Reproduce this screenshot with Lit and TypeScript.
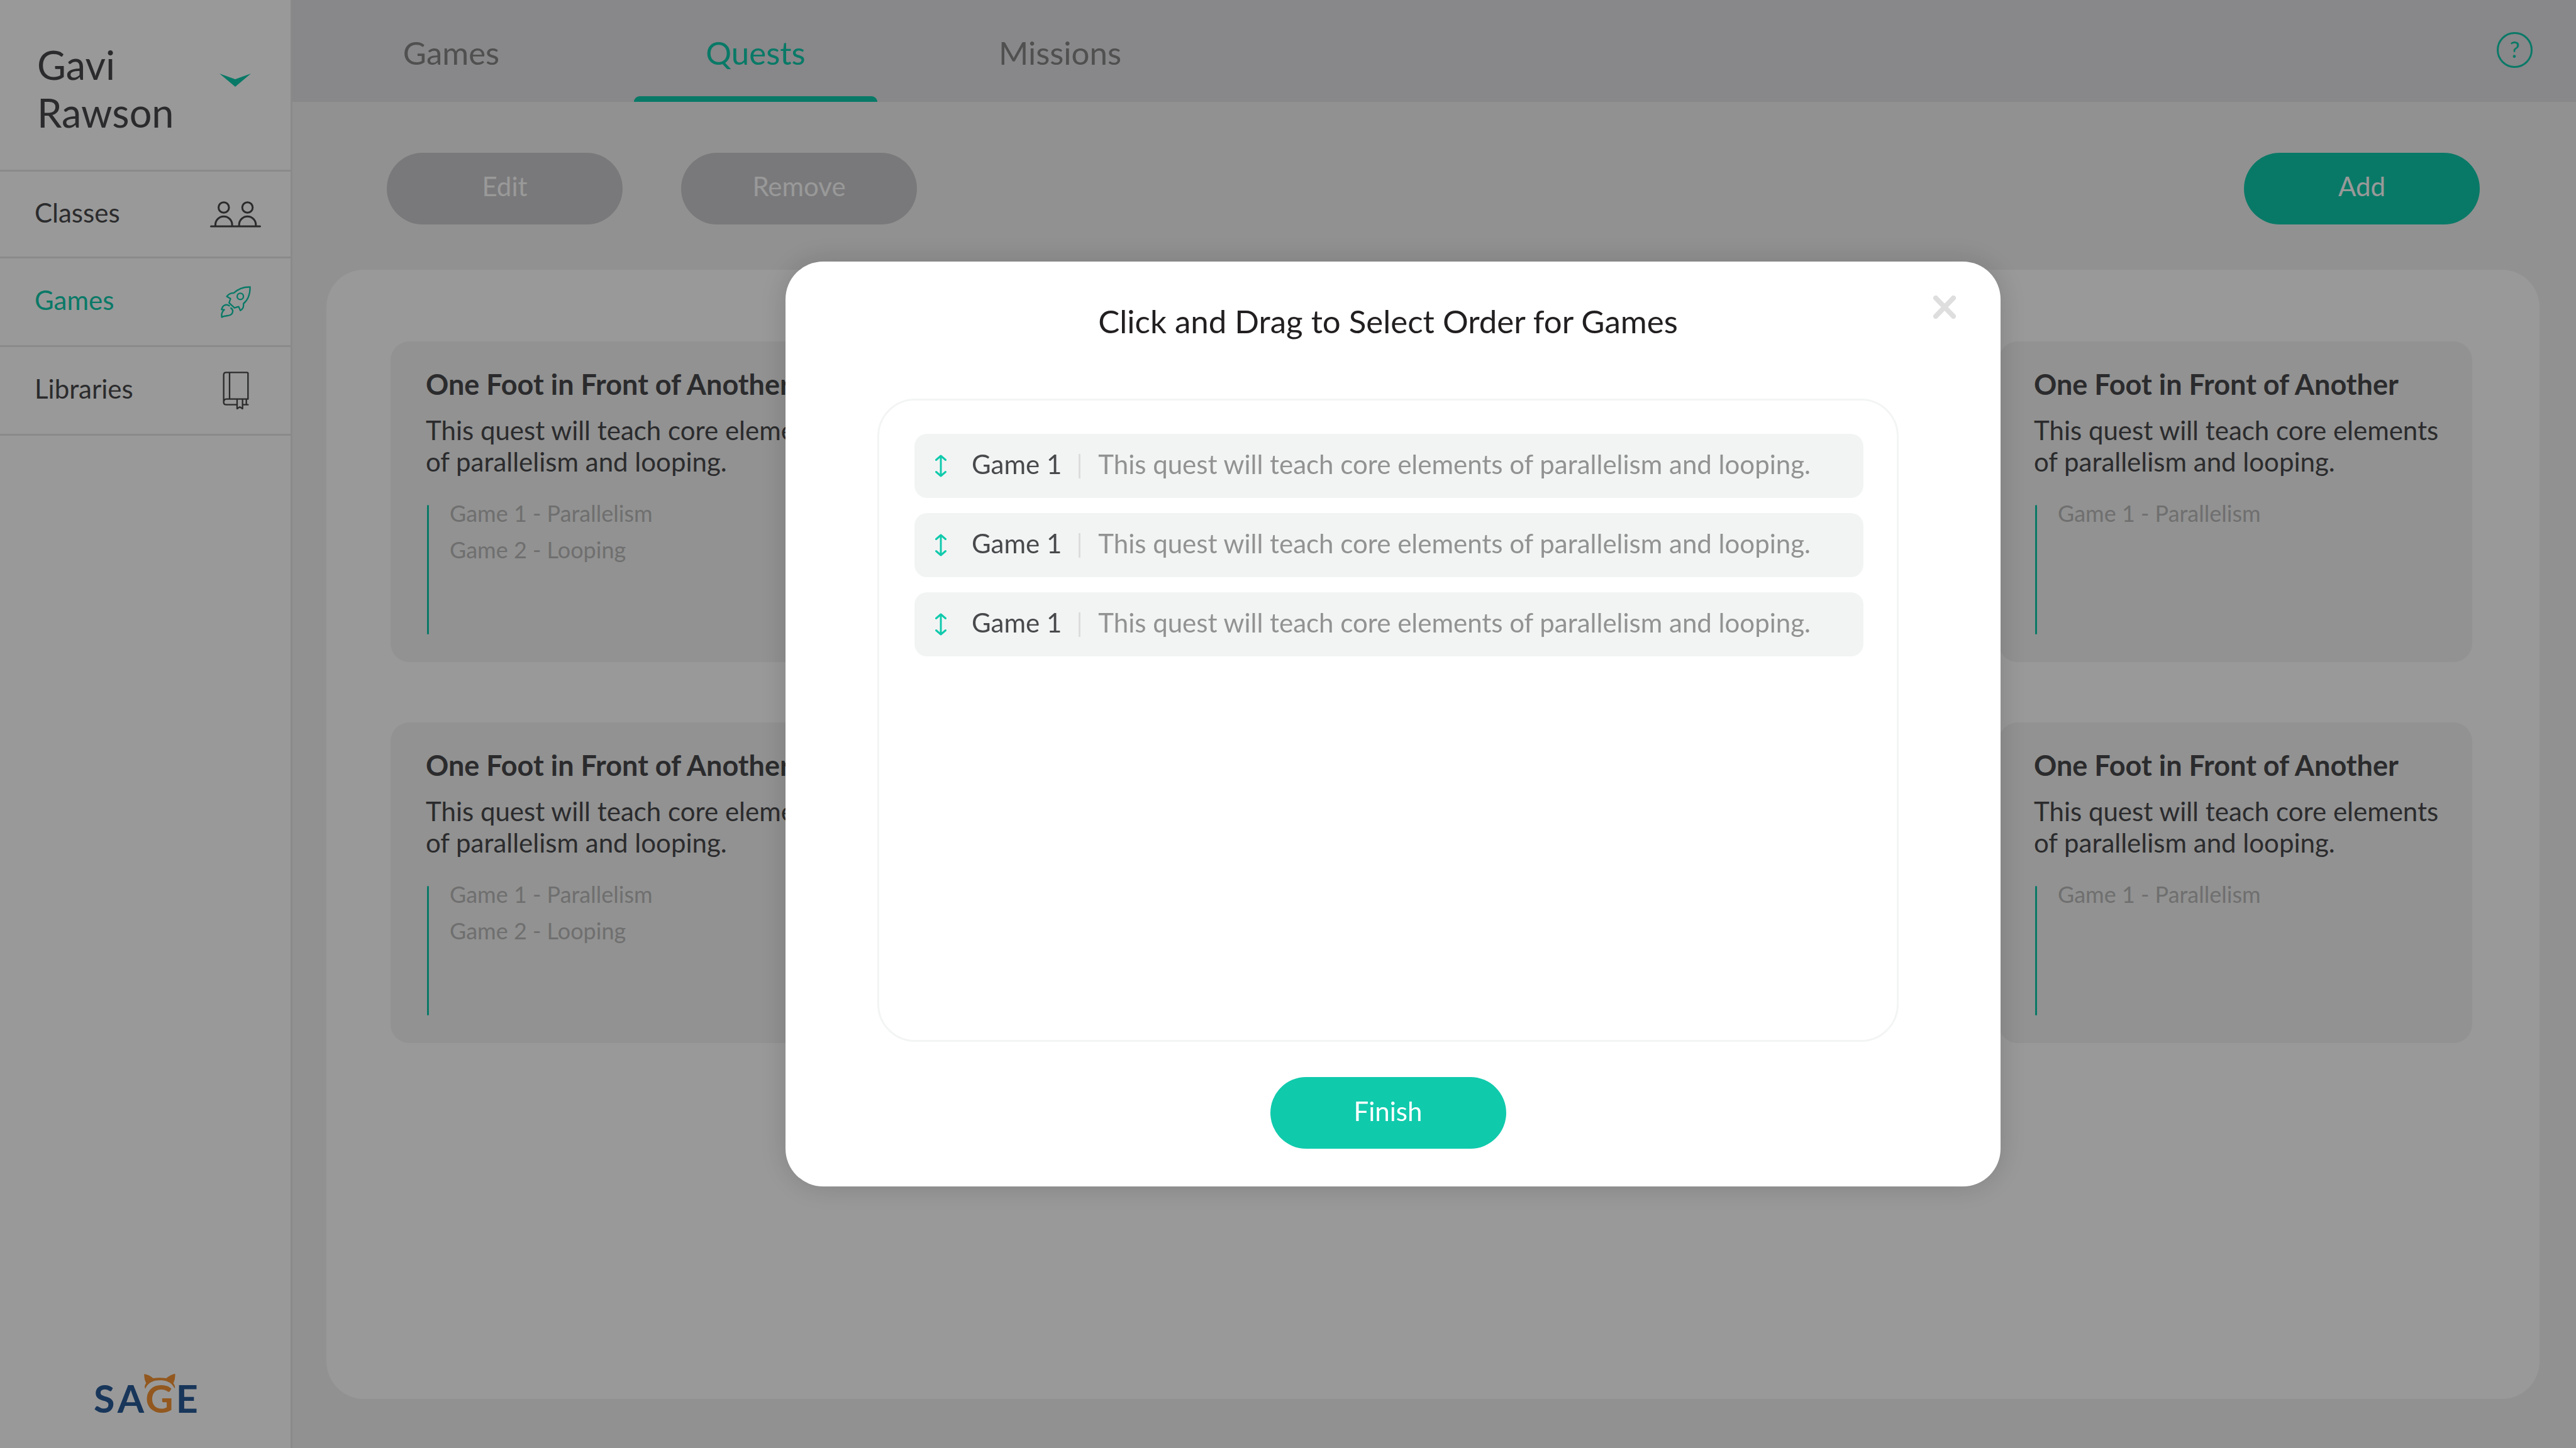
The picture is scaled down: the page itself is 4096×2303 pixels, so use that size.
import { LitElement, html, css, svg } from "lit";
import { customElement, property } from "lit/decorators.js";
import { classMap } from "lit/directives/class-map.js";

interface Quest {
  title: string;
  summary: string;
  games: string[];
}

const SUMMARY = "This quest will teach core elements of parallelism and looping.";
const TITLE = "One Foot in Front of Another";

const row = (): Quest[] => [
  { title: TITLE, summary: SUMMARY, games: ["Game 1 - Parallelism", "Game 2 - Looping"] },
  { title: TITLE, summary: SUMMARY, games: ["Game 1 - Parallelism"] },
];

const quests: Quest[] = [...row(), ...row()];

const peopleIcon = html`<svg width="81" height="42" viewBox="0 0 81 42" fill="none" stroke="currentColor" stroke-width="3" stroke-linecap="round" aria-hidden="true">
  <circle cx="21.8" cy="10" r="8.3" />
  <circle cx="59.5" cy="10" r="8.3" />
  <path d="M8.5 39v-1.5a13.3 13.3 0 0 1 26.6 0V39M46.2 39v-1.5a13.3 13.3 0 0 1 26.6 0V39M1.5 39.9h78" />
</svg>`;

const rocketIcon = html`<svg width="48" height="51" viewBox="33 33 145 153" fill="none" stroke="currentColor" stroke-width="7" stroke-linecap="round" stroke-linejoin="round" aria-hidden="true">
  <path d="M174 37C146 36 119 44 95 66C84 65 74 67 62 82L80 93L73 113L99 137L119 131L127 150C139 142 144 135 142 117C163 100 174 76 174 37Z" />
  <circle cx="127" cy="82" r="15" />
  <path d="M74 127C60 118 42 122 37 145L50 146C38 156 35 166 38 182C55 171 80 180 88 163C93 152 90 143 82 138" />
</svg>`;

const bookIcon = html`<svg width="42" height="61" viewBox="43 440 124 183" fill="none" stroke="currentColor" stroke-width="7" stroke-linecap="round" stroke-linejoin="round" aria-hidden="true">
  <path d="M163 571V448Q163 444 158 444H58Q47 444 47 456V587Q47 598 59 598H110M138 598H163M155 572V598M75 444V571M47 588Q47 571 60 571H163M111 572V617L124 609L137 617V572" />
</svg>`;

const chevronIcon = html`<svg width="50" height="21" viewBox="0 0 50 21" fill="currentColor" aria-hidden="true">
  <path d="M0 0L25 9L50 0L25 21Z" />
</svg>`;

const arrowsIcon = html`<svg width="18" height="36" viewBox="0 0 18 36" fill="none" stroke="currentColor" stroke-width="3" stroke-linecap="round" stroke-linejoin="round" aria-hidden="true">
  <path d="M9 2v32M1.5 8.500L9 2l7.500 6.500M1.500 27.500L9 34l7.500-6.500" />
</svg>`;

const closeIcon = html`<svg width="36" height="37" viewBox="0 0 36 37" fill="none" stroke="currentColor" stroke-width="8" stroke-linecap="round" aria-hidden="true">
  <path d="M4 4L32 33M32 4L4 33" />
</svg>`;

const earsShape = svg`<path fill="#f39335" d="M238 4Q262 8 280 24Q312 19 343 24Q362 8 385 2Q388 25 377 48Q388 62 383 73C366 40 340 34 312 34C284 34 258 42 243 74Q236 62 247 48Q236 25 238 4Z" />`;

@customElement("quest-card")
export class QuestCard extends LitElement {
  @property({ attribute: false }) quest!: Quest;

  static styles = css`
    :host {
      display: block;
    }
    .card {
      box-sizing: border-box;
      height: 510px;
      padding: 41px 48px 44px 56px;
      border-radius: 30px;
      background: #f3f3f3;
      color: #48494b;
      display: flex;
      flex-direction: column;
    }
    .title {
      margin: 0 0 21px;
      font-size: 45px;
      line-height: 54px;
      font-weight: 700;
    }
    .summary {
      margin: 0 0 44px;
      font-size: 42px;
      line-height: 50px;
    }
    .games {
      flex: 1;
      display: flex;
      gap: 33px;
      color: #bababa;
      font-size: 36px;
      line-height: 58px;
    }
    .rule {
      width: 3px;
      margin-left: 2px;
      border-radius: 2px;
      background: #10caac;
    }
    .names {
      margin: -16px 0 0;
      padding: 0;
      list-style: none;
    }
  `;

  render() {
    return html`
      <article class="card">
        <h2 class="title">${this.quest.title}</h2>
        <p class="summary">${this.quest.summary}</p>
        <div class="games">
          <span class="rule"></span>
          <ul class="names">
            ${this.quest.games.map((name) => html`<li>${name}</li>`)}
          </ul>
        </div>
      </article>
    `;
  }
}

@customElement("order-dialog")
export class OrderDialog extends LitElement {
  static styles = css`
    :host {
      display: block;
    }
    .dialog {
      box-sizing: border-box;
      width: 1932px;
      padding: 64px 162px 60px 146px;
      border-radius: 60px;
      background: #fff;
      box-shadow: 0 0 48px rgba(0, 0, 0, 0.16);
      position: relative;
      display: flex;
      flex-direction: column;
      align-items: center;
    }
    .heading {
      margin: 0 0 92px;
      color: #221f20;
      font-size: 51px;
      line-height: 62px;
      font-weight: 400;
    }
    .close {
      position: absolute;
      top: 54px;
      right: 71px;
      padding: 0;
      border: 0;
      background: none;
      color: #dedede;
      display: flex;
    }
    .list {
      box-sizing: border-box;
      align-self: stretch;
      min-height: 1023px;
      margin: 0 0 56px;
      padding: 53px 53px 53px 56px;
      border: 3px solid #f3f4f4;
      border-radius: 60px;
      list-style: none;
      display: flex;
      flex-direction: column;
      gap: 24px;
    }
    .item {
      height: 102px;
      border-radius: 20px;
      background: #f2f4f4;
      display: flex;
      align-items: center;
      padding-left: 33px;
      font-size: 42px;
      line-height: 50px;
    }
    .handle {
      padding: 0;
      margin-right: 40px;
      border: 0;
      background: none;
      color: #10caac;
      display: flex;
      cursor: grab;
    }
    .name {
      color: #48494b;
      padding-bottom: 6px;
    }
    .about {
      color: #929292;
      margin-left: 28px;
      padding-bottom: 6px;
    }
    .divider {
      width: 3px;
      height: 39px;
      margin-left: 27px;
      background: #dcdcdc;
    }
    .finish {
      width: 375px;
      height: 114px;
      padding: 0 0 6px;
      border: 0;
      border-radius: 57px;
      background: #10caac;
      color: #fff;
      font: inherit;
      font-size: 42px;
    }
  `;

  render() {
    return html`
      <section class="dialog" role="dialog" aria-modal="true" aria-labelledby="heading">
        <h1 class="heading" id="heading">Click and Drag to Select Order for Games</h1>
        <button class="close" aria-label="Close">${closeIcon}</button>
        <ul class="list">
          ${[0, 1, 2].map(
            () => html`
              <li class="item" draggable="true">
                <button class="handle" aria-label="Move">${arrowsIcon}</button>
                <span class="name">Game 1</span>
                <span class="divider"></span>
                <span class="about">${SUMMARY}</span>
              </li>
            `
          )}
        </ul>
        <button class="finish">Finish</button>
      </section>
    `;
  }
}

@customElement("app-root")
export class AppRoot extends LitElement {
  static styles = css`
    :host {
      display: block;
      font-family: Lato, "Noto Sans", sans-serif;
      color: #48494b;
    }
    .page {
      display: flex;
      min-height: 100vh;
      background: #f2f2f2;
    }
    .sidebar {
      width: 462px;
      flex: none;
      border-right: 3px solid #e6e6e6;
      background: #fff;
      display: flex;
      flex-direction: column;
    }
    .user {
      box-sizing: border-box;
      width: 100%;
      height: 273px;
      padding: 12px 63px 0 59px;
      border: 0;
      border-bottom: 3px solid #e6e6e6;
      background: none;
      color: inherit;
      font: inherit;
      font-size: 63px;
      line-height: 76px;
      text-align: left;
      display: flex;
      align-items: center;
      justify-content: space-between;
    }
    .user-name {
      width: 240px;
    }
    .chevron {
      color: #10caac;
      display: flex;
      padding-bottom: 28px;
    }
    .link {
      height: 138px;
      padding: 0 47px 0 55px;
      border-bottom: 3px solid #e6e6e6;
      color: inherit;
      font-size: 42px;
      line-height: 50px;
      text-decoration: none;
      display: flex;
      align-items: center;
      justify-content: space-between;
    }
    .link-first {
      height: 135px;
    }
    .link-active {
      color: #10caac;
    }
    .link-label {
      padding-bottom: 6px;
    }
    .link-icon {
      width: 81px;
      display: flex;
      justify-content: center;
    }
    .logo {
      margin: auto 0 0;
      padding-bottom: 55px;
      display: flex;
      justify-content: center;
    }
    .logo-art {
      overflow: visible;
      font-weight: 700;
      font-size: 183px;
      text-anchor: middle;
    }
    .main {
      flex: 1;
      min-width: 0;
      display: flex;
      flex-direction: column;
    }
    .topbar {
      height: 162px;
      padding: 0 69px 0 59px;
      background: #e3e2e5;
      display: flex;
      justify-content: space-between;
    }
    .tabs {
      display: flex;
      gap: 97px;
    }
    .tab {
      box-sizing: border-box;
      width: 387px;
      color: #868686;
      font-size: 51px;
      line-height: 62px;
      text-align: center;
      text-decoration: none;
      padding-top: 53px;
      display: flex;
      flex-direction: column;
      justify-content: space-between;
    }
    .tab-active {
      color: #10caac;
    }
    .tab-active::after {
      content: "";
      height: 9px;
      border-radius: 9px 9px 0 0;
      background: #10caac;
    }
    .help {
      box-sizing: border-box;
      width: 57px;
      height: 57px;
      margin-top: 51px;
      padding: 0 0 4px;
      border: 3px solid #10caac;
      border-radius: 50%;
      background: none;
      color: #10caac;
      font: inherit;
      font-size: 36px;
      line-height: 44px;
    }
    .toolbar {
      padding: 81px 153px 72px 150px;
      display: flex;
      gap: 93px;
    }
    .button {
      width: 375px;
      height: 114px;
      padding: 0 0 8px;
      border: 0;
      border-radius: 57px;
      background: #cacacd;
      color: #fff;
      font: inherit;
      font-size: 42px;
    }
    .button-add {
      margin-left: auto;
      background: #10caac;
    }
    .panel {
      flex: 1;
      margin: 0 58px 78px 54px;
      padding: 114px 107px 114px 102px;
      border-radius: 60px;
      background: #fff;
      display: grid;
      grid-template-columns: repeat(2, 753px);
      justify-content: space-between;
      align-content: start;
      row-gap: 96px;
    }
    .overlay {
      position: fixed;
      inset: 0;
      background: rgba(0, 0, 0, 0.4);
      padding-left: 334px;
      display: flex;
      align-items: center;
      justify-content: center;
    }
  `;

  private navLink(label: string, icon: unknown, extra = "") {
    const classes = {
      link: true,
      "link-first": extra === "first",
      "link-active": extra === "active",
    };
    return html`<a class=${classMap(classes)} href="#${label.toLowerCase()}">
      <span class="link-label">${label}</span>
      <span class="link-icon">${icon}</span>
    </a>`;
  }

  render() {
    return html`
      <div class="page">
        <aside class="sidebar">
          <button class="user">
            <span class="user-name">Gavi Rawson</span>
            <span class="chevron">${chevronIcon}</span>
          </button>
          <nav>
            ${this.navLink("Classes", peopleIcon, "first")}
            ${this.navLink("Games", rocketIcon, "active")}
            ${this.navLink("Libraries", bookIcon)}
          </nav>
          <div class="logo">
            <svg class="logo-art" width="163" height="64" viewBox="0 0 489 192" fill="#285a96">
              ${earsShape}
              <text x="47" y="188">S</text>
              <text x="174" y="188">A</text>
              <text x="310" y="188" fill="#f39335">G</text>
              <text x="442" y="188">E</text>
            </svg>
          </div>
        </aside>
        <div class="main">
          <header class="topbar">
            <nav class="tabs">
              <a class="tab" href="#games">Games</a>
              <a class="tab tab-active" href="#quests">Quests</a>
              <a class="tab" href="#missions">Missions</a>
            </nav>
            <button class="help">?</button>
          </header>
          <div class="toolbar">
            <button class="button">Edit</button>
            <button class="button">Remove</button>
            <button class="button button-add">Add</button>
          </div>
          <main class="panel">
            ${quests.map((quest) => html`<quest-card .quest=${quest}></quest-card>`)}
          </main>
        </div>
      </div>
      <div class="overlay"><order-dialog></order-dialog></div>
    `;
  }
}
